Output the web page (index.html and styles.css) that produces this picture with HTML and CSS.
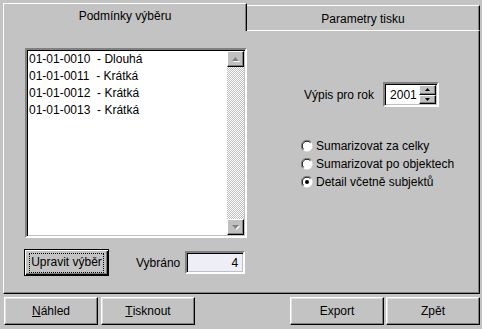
FILE: index.html
```html
<!DOCTYPE html>
<html>
<head>
<meta charset="utf-8">
<link rel="stylesheet" href="styles.css">
</head>
<body>
<div class="window">
  <div class="tabstrip">
    <div class="tab active">Podmínky výběru</div>
    <div class="tab inactive">Parametry tisku</div>
  </div>
  <div class="page">
    <div class="left">
      <div class="listbox">
        <div class="items">
          <div class="item">01-01-0010  - Dlouhá</div>
          <div class="item">01-01-0011  - Krátká</div>
          <div class="item">01-01-0012  - Krátká</div>
          <div class="item">01-01-0013  - Krátká</div>
        </div>
        <div class="vscroll">
          <div class="sbtn">
            <svg width="9" height="6" viewBox="0 0 9 6"><polygon points="4.5,1 8,5 1,5" fill="#fff" transform="translate(1,1)"/><polygon points="4.5,1 8,5 1,5" fill="#808080"/></svg>
          </div>
          <div class="track"></div>
          <div class="sbtn">
            <svg width="9" height="6" viewBox="0 0 9 6"><polygon points="1,1 8,1 4.5,5" fill="#fff" transform="translate(1,1)"/><polygon points="1,1 8,1 4.5,5" fill="#808080"/></svg>
          </div>
        </div>
      </div>
      <div class="leftrow">
        <button class="btn default"><span class="focus">Upravit výběr</span></button>
        <span class="lbl">Vybráno</span>
        <div class="field">4</div>
      </div>
    </div>
    <div class="right">
      <div class="yearrow">
        <span class="lbl">Výpis pro rok</span>
        <div class="spinner">
          <div class="spinval">2001</div>
          <div class="spinbtns">
            <div class="spb"><svg width="5" height="3" viewBox="0 0 5 3"><polygon points="2.5,0 5,3 0,3" fill="#000"/></svg></div>
            <div class="spb"><svg width="5" height="3" viewBox="0 0 5 3"><polygon points="0,0 5,0 2.5,3" fill="#000"/></svg></div>
          </div>
        </div>
      </div>
      <div class="radios">
        <div class="radio">
          <svg width="12" height="12" viewBox="0 0 12 12"><circle cx="6" cy="6" r="5.5" fill="#fff"/><path d="M10.2 1.8A5.8 5.8 0 0 0 1.8 10.2" fill="none" stroke="#808080"/><path d="M9.4 2.6A4.6 4.6 0 0 0 2.6 9.4" fill="none" stroke="#000"/></svg>
          <span>Sumarizovat za celky</span>
        </div>
        <div class="radio">
          <svg width="12" height="12" viewBox="0 0 12 12"><circle cx="6" cy="6" r="5.5" fill="#fff"/><path d="M10.2 1.8A5.8 5.8 0 0 0 1.8 10.2" fill="none" stroke="#808080"/><path d="M9.4 2.6A4.6 4.6 0 0 0 2.6 9.4" fill="none" stroke="#000"/></svg>
          <span>Sumarizovat po objektech</span>
        </div>
        <div class="radio">
          <svg width="12" height="12" viewBox="0 0 12 12"><circle cx="6" cy="6" r="5.5" fill="#fff"/><path d="M10.2 1.8A5.8 5.8 0 0 0 1.8 10.2" fill="none" stroke="#808080"/><path d="M9.4 2.6A4.6 4.6 0 0 0 2.6 9.4" fill="none" stroke="#000"/><circle cx="6" cy="6" r="2" fill="#000"/></svg>
          <span>Detail včetně subjektů</span>
        </div>
      </div>
    </div>
  </div>
  <div class="bottombar">
    <button class="btn big"><u>N</u>áhled</button>
    <button class="btn big gap"><u>T</u>isknout</button>
    <button class="btn big push">Export</button>
    <button class="btn big gap2">Zpět</button>
  </div>
</div>
</body>
</html>
```
FILE: styles.css
```css
html, body {
  margin: 0;
  padding: 0;
}
body {
  width: 482px;
  height: 329px;
  overflow: hidden;
  background: #c3c3c3;
  font-family: "Liberation Sans", Arial, sans-serif;
  font-size: 12px;
  color: #000;
}
.window {
  width: 482px;
  height: 329px;
  padding-top: 3px;
  box-sizing: border-box;
  background-color: #c3c3c3;
}
.tabstrip {
  display: flex;
  margin-left: 3px;
  width: 477px;
  height: 28px;
}
.tab {
  box-sizing: border-box;
  display: flex;
  justify-content: center;
  align-items: center;
}
.tab.active {
  width: 244px;
  height: 28px;
  border-top: 1px solid #fff;
  border-left: 1px solid #fff;
  border-right: 1px solid #000;
  box-shadow: inset -1px 0 #808080;
  padding-bottom: 4px;
}
.tab.inactive {
  flex: 1;
  margin-top: 2px;
  height: 26px;
  border-top: 1px solid #fff;
  border-right: 1px solid #000;
  border-bottom: 1px solid #fff;
  box-shadow: inset -1px 0 #808080;
  padding-top: 1px;
}
.page {
  box-sizing: border-box;
  margin-left: 3px;
  width: 477px;
  height: 263px;
  border-left: 1px solid #fff;
  border-right: 1px solid #000;
  border-bottom: 1px solid #000;
  box-shadow: inset -1px -1px #808080;
  display: flex;
  padding: 17px 0 0 21px;
}
.left {
  width: 222px;
  display: flex;
  flex-direction: column;
}
.listbox {
  box-sizing: border-box;
  width: 222px;
  height: 190px;
  border: 2px solid;
  border-color: #808080 #fff #fff #808080;
  box-shadow: inset 1px 1px #000, inset -1px -1px #c0c0c0;
  background: #fff;
  display: flex;
}
.items {
  flex: 1;
  padding: 1px 0 0 2px;
}
.item {
  white-space: pre;
  line-height: 17px;
  height: 17px;
}
.vscroll {
  width: 17px;
  display: flex;
  flex-direction: column;
  margin: 1px 1px 1px 0;
}
.sbtn {
  box-sizing: border-box;
  width: 17px;
  height: 16px;
  background: #c0c0c0;
  border: 1px solid;
  border-color: #fff #000 #000 #fff;
  box-shadow: inset -1px -1px #808080;
  display: flex;
  align-items: center;
  justify-content: center;
}
.track {
  flex: 1;
  background: repeating-conic-gradient(#c0c0c0 0 25%, #fff 0 50%) 0 0 / 2px 2px;
}
.leftrow {
  display: flex;
  align-items: center;
  margin-top: 11px;
  margin-left: -1px;
}
.btn {
  box-sizing: border-box;
  font-family: "Liberation Sans", Arial, sans-serif;
  font-size: 12px;
  color: #000;
  background: #c3c3c3;
  border: 1px solid;
  border-color: #fff #000 #000 #fff;
  box-shadow: inset -1px -1px #808080, inset 1px 1px #dfdfdf;
  padding: 0;
  margin: 0;
  display: flex;
  align-items: center;
  justify-content: center;
}
.btn.default {
  width: 85px;
  height: 27px;
  border: 1px solid #000;
  box-shadow: inset 1px 1px #fff, inset -1px -1px #000, inset -2px -2px #808080;
}
.focus {
  border: 1px dotted #000;
  padding: 2px 1px 3px 1px;
  line-height: 13px;
}
.lbl {
  white-space: nowrap;
}
.leftrow .lbl {
  margin-left: 27px;
}
.field {
  box-sizing: border-box;
  margin-left: 5px;
  width: 60px;
  height: 23px;
  border: 2px solid;
  border-color: #808080 #fff #fff #808080;
  box-shadow: inset 1px 1px #000, inset -1px -1px #c0c0c0;
  background: #eeeef6;
  text-align: right;
  padding: 3px 5px 0 0;
  line-height: 15px;
}
.right {
  margin-left: 54px;
  margin-top: 34px;
  display: flex;
  flex-direction: column;
}
.yearrow {
  display: flex;
  align-items: center;
  margin-left: 3px;
}
.spinner {
  box-sizing: border-box;
  margin-left: 9px;
  width: 56px;
  height: 25px;
  border: 2px solid;
  border-color: #808080 #fff #fff #808080;
  box-shadow: inset 1px 1px #000, inset -1px -1px #c0c0c0;
  background: #fff;
  display: flex;
  align-items: stretch;
}
.spinval {
  flex: 1;
  padding: 4px 0 0 5px;
  line-height: 15px;
}
.spinbtns {
  width: 17px;
  display: flex;
  flex-direction: column;
  margin: 1px 1px 1px 0;
}
.spb {
  box-sizing: border-box;
  flex: 1;
  background: #c0c0c0;
  border: 1px solid;
  border-color: #fff #000 #000 #fff;
  box-shadow: inset -1px -1px #808080;
  display: flex;
  align-items: center;
  justify-content: center;
}
.radios {
  margin-top: 30px;
  display: flex;
  flex-direction: column;
}
.radio {
  display: flex;
  align-items: center;
  height: 18px;
}
.radio svg {
  width: 12px;
  height: 12px;
  margin-right: 3px;
  flex: none;
}
.bottombar {
  display: flex;
  margin-top: 3px;
  padding-left: 4px;
  padding-right: 2px;
}
.btn.big {
  width: 94px;
  height: 28px;
}
.btn.gap {
  margin-left: 3px;
}
.btn.push {
  margin-left: auto;
}
.btn.gap2 {
  margin-left: 2px;
}
```
